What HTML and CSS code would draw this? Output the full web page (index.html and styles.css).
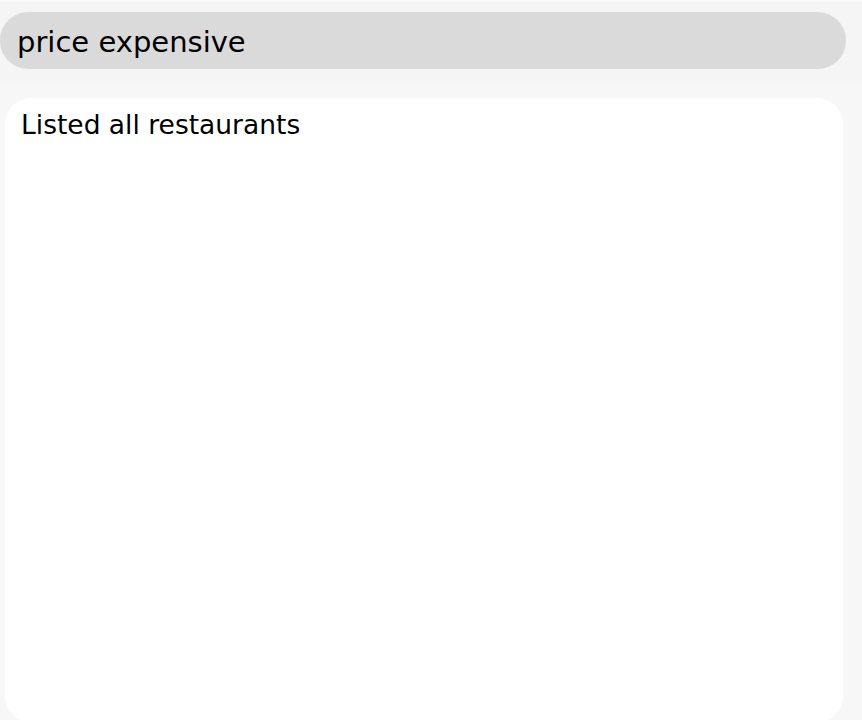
FILE: index.html
```html
<!DOCTYPE html>
<html>
<head>
<meta charset="utf-8">
<link rel="stylesheet" href="styles.css">
</head>
<body>
<div class="page">
  <header class="top">
    <div class="search">price expensive</div>
  </header>
  <main class="panel">
    <div class="card">Listed all restaurants</div>
  </main>
</div>
</body>
</html>
```
FILE: styles.css
```css
html, body {
  margin: 0;
  padding: 0;
  height: 100%;
  background: #f7f7f7;
  overflow: hidden;
}
.page {
  height: 720px;
  display: flex;
  flex-direction: column;
  font-family: "DejaVu Sans", Verdana, sans-serif;
  color: #000;
}
.top {
  padding: 12px 16px 12px 0;
  background: #f5f5f5;
  border-top: 2px solid #fafafa;
}
.search {
  height: 57px;
  box-sizing: border-box;
  background: #dadada;
  border-radius: 28px;
  padding: 2px 17px 0;
  display: flex;
  align-items: center;
  font-size: 29px;
  margin-top: -2px;
}
.panel {
  flex: 1;
  padding: 17px 19px 0 5px;
  display: flex;
  flex-direction: column;
  min-height: 0;
}
.card {
  flex: 1;
  background: #fff;
  border-radius: 26px;
  padding: 11px 16px 9px;
  font-size: 26.5px;
  margin-bottom: -2px;
}
```
